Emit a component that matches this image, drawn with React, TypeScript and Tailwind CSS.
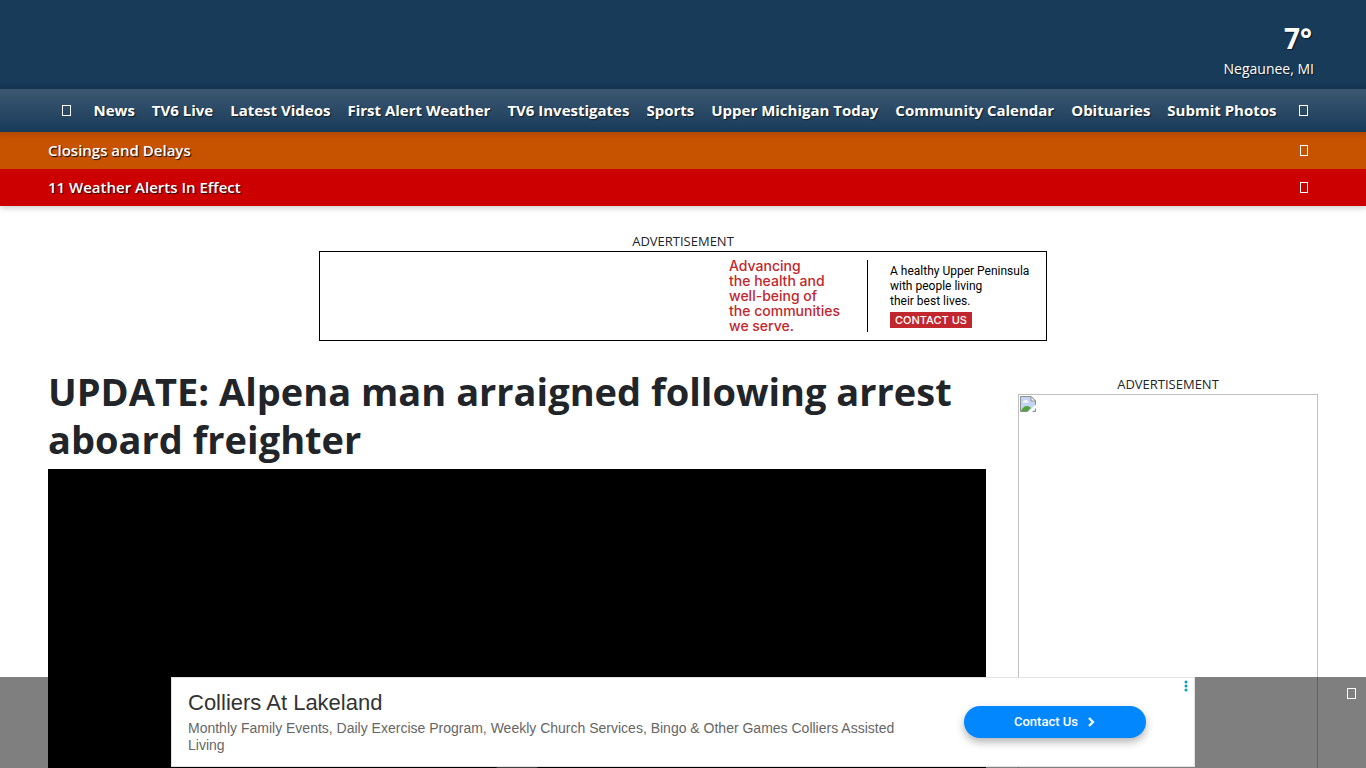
import { clsx } from "clsx";
import React from "react";

const NAV_LINKS = [
  "News",
  "TV6 Live",
  "Latest Videos",
  "First Alert Weather",
  "TV6 Investigates",
  "Sports",
  "Upper Michigan Today",
  "Community Calendar",
  "Obituaries",
  "Submit Photos",
];

const ALERTS = [
  {
    title: "Closings and Delays",
    color: "bg-[#c75300]",
    shadow: "inset-shadow-[0_8px_6px_-6px_rgba(0,0,0,0.15)]",
  },
  {
    title: "11 Weather Alerts In Effect",
    color: "bg-[#cc0000]",
    shadow: "",
  },
];

// empty glyph box, shown while the icon font is missing
const Glyph = ({ narrow = false }: { narrow?: boolean }) => (
  <span
    className={clsx(
      "block h-[11px] border border-white",
      narrow ? "w-2" : "w-[9px]"
    )}
    aria-hidden="true"
  />
);

const Header = () => {
  return (
    <header className="shadow-[0_2px_6px_rgba(0,0,0,0.2)]">
      <div className="flex h-[89px] justify-end bg-[#183b5a] px-[52px] pt-5 text-white inset-shadow-[0_-8px_6px_-6px_rgba(0,0,0,0.2)]">
        <a href="#weather" className="flex flex-col items-end">
          <span className="pr-[2px] text-[28px] leading-9 font-bold text-shadow-[1px_1px_1px_rgba(0,0,0,0.6)]">
            7°
          </span>
          <span className="mt-[3px] text-sm text-shadow-[1px_1px_1px_rgba(0,0,0,0.6)]">
            Negaunee, MI
          </span>
        </a>
      </div>

      <nav className="flex h-[43px] items-center justify-between bg-linear-to-b from-[#3c5871] to-[#183b5a] pr-[58px] pl-[62px] text-white">
        <button type="button" aria-label="Menu">
          <Glyph />
        </button>
        <ul className="flex gap-[17px] pb-[2px] text-[15px] leading-6 font-bold whitespace-nowrap text-shadow-[1px_1px_1px_rgba(0,0,0,0.6)]">
          {NAV_LINKS.map((link) => (
            <li key={link}>
              <a href="#section">{link}</a>
            </li>
          ))}
        </ul>
        <button type="button" aria-label="Search">
          <Glyph />
        </button>
      </nav>

      {ALERTS.map((alert) => (
        <div
          key={alert.title}
          className={clsx(
            "flex h-[37px] items-center justify-between pr-[58px] pl-12 text-white",
            alert.color,
            alert.shadow
          )}
        >
          <a
            href="#alerts"
            className="pb-[2px] text-[15px] leading-6 font-semibold text-shadow-[1px_1px_1px_rgba(0,0,0,0.9)]"
          >
            {alert.title}
          </a>
          <button type="button" aria-label={`Close ${alert.title}`}>
            <Glyph narrow />
          </button>
        </div>
      ))}
    </header>
  );
};

const BannerAd = () => {
  return (
    <section className="mx-auto w-full max-w-[728px] pt-[25px]">
      <p className="text-center text-[13px] leading-5">ADVERTISEMENT</p>
      <div className="flex h-[90px] items-center justify-end border border-black bg-white pr-[22px]">
        <p className="w-[138px] pb-[2px] font-['Inter',sans-serif] text-sm leading-[15px] font-medium text-[#c1272d]">
          Advancing
          <br />
          the health and
          <br />
          well-being of
          <br />
          the communities
          <br />
          we serve.
        </p>
        <div className="flex h-[72px] w-[157px] items-center border-l border-black pl-[22px]">
          <div className="font-['Roboto',sans-serif] text-xs leading-[15px] whitespace-nowrap text-black">
            <p>A healthy Upper Peninsula</p>
            <p>with people living</p>
            <p>their best lives.</p>
            <a
              href="#contact"
              className="mt-[3px] block w-[82px] bg-[#c1272d] text-center font-['Inter',sans-serif] text-[11px] leading-4 font-medium text-white"
            >
              CONTACT US
            </a>
          </div>
        </div>
      </div>
    </section>
  );
};

const BrokenImage = () => (
  <svg width="16" height="16" viewBox="0 0 16 16" aria-hidden="true">
    <path d="M0.5 0.5H11L15.5 5V15.5H0.5Z" fill="#c3d5f3" stroke="#8f8f8f" />
    <path d="M11 0.5V5H15.5Z" fill="#fff" stroke="#8f8f8f" />
    <path
      d="M3 6.500c0-1.200.8-1.800 1.800-1.800.4-1 2.400-1 2.700.3 1.200 0 1.500 1.500.5 1.500z"
      fill="#fff"
    />
    <path d="M1 15c1-3 3.500-5 6-5 2 0 3 1 4 2l-3 3z" fill="#4fa53c" />
    <path d="M7.500 16L16 8.500V12l-4 4z" fill="#fff" />
  </svg>
);

const StickyAd = ({ onClose }: { onClose: () => void }) => {
  return (
    <div className="fixed inset-x-0 bottom-0 flex h-[91px] justify-center bg-black/50">
      <div className="relative flex h-[90px] w-full max-w-[1024px] items-center justify-between border border-[#e2e2e2] bg-white pr-12 pl-4 font-['Liberation_Sans',Arial,sans-serif]">
        <div className="max-w-[716px] pb-[2px]">
          <h2 className="text-[22px] leading-7 text-[#333]">
            Colliers At Lakeland
          </h2>
          <p className="mt-[3px] text-sm leading-[17px] text-[#666]">
            Monthly Family Events, Daily Exercise Program, Weekly Church
            Services, Bingo &amp; Other Games Colliers Assisted Living
          </p>
        </div>
        <a
          href="#contact"
          className="flex h-8 w-[182px] items-center justify-center gap-2 rounded-full bg-[#0387ff] font-['Roboto',sans-serif] text-[13px] font-medium text-white shadow-[0_4px_8px_rgba(0,0,0,0.3)]"
        >
          Contact Us
          <svg width="10" height="12" viewBox="0 0 10 12" fill="none">
            <path d="M3 2L7 6L3 10" stroke="#fff" strokeWidth="2.2" />
          </svg>
        </a>
        <button
          type="button"
          aria-label="Ad options"
          className="absolute top-[2px] right-[6px]"
        >
          <svg width="4" height="12" viewBox="0 0 4 12" fill="#00a3b4">
            <circle cx="2" cy="2" r="1.500" />
            <circle cx="2" cy="6" r="1.500" />
            <circle cx="2" cy="10" r="1.500" />
          </svg>
        </button>
      </div>
      <button
        type="button"
        aria-label="Close advertisement"
        onClick={onClose}
        className="absolute top-[11px] right-[10px]"
      >
        <Glyph />
      </button>
    </div>
  );
};

const App = () => {
  const [showAd, setShowAd] = React.useState(true);

  return (
    <div className="min-h-screen bg-white font-['Open_Sans','Noto_Sans',sans-serif] text-[#212529]">
      <Header />
      <BannerAd />

      <main className="flex gap-8 px-12 pt-[26px]">
        <article className="min-w-0 flex-1">
          <h1 className="text-[38px] leading-12 font-bold">
            UPDATE: Alpena man arraigned following arrest aboard freighter
          </h1>
          <div className="mt-[6px] flex aspect-video items-center justify-center bg-black">
            <button
              type="button"
              aria-label="Play video"
              className="flex size-20 items-center justify-center rounded-full bg-[#808080]"
            >
              <svg width="28" height="32" viewBox="0 0 28 32" fill="#fff">
                <path d="M2 2L26 16L2 30Z" />
              </svg>
            </button>
          </div>
        </article>

        <aside className="w-[300px] shrink-0 pt-[7px]">
          <p className="text-center text-[13px] leading-5">ADVERTISEMENT</p>
          <div className="h-[600px] border border-[#c0c0c0] p-px">
            <BrokenImage />
          </div>
        </aside>
      </main>

      {showAd && <StickyAd onClose={() => setShowAd(false)} />}
    </div>
  );
};

export default App;
